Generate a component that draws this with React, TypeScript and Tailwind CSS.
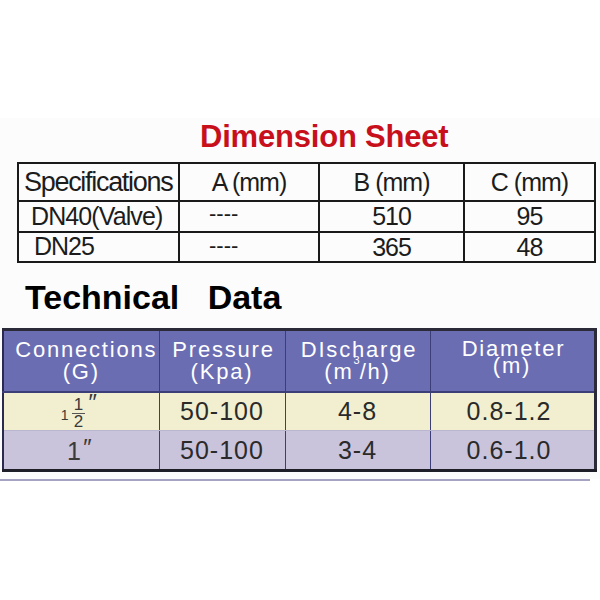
import React from "react";

const F = { fontFamily: '"Liberation Sans", Arial, sans-serif' };

export default function App() {
  const b = "border-2 border-[#1a1a1a]";
  return (
    <div className="w-[600px] h-[600px] bg-white overflow-hidden" style={F}>
      <div className="h-[118px] bg-white" />
      <div className="bg-[#fcfcfc]">
        <div className="pl-[200px] h-[44px] pb-[8px] flex items-center text-[31px] font-bold text-[#c8101c] leading-none tracking-[-0.2px]">
          Dimension Sheet
        </div>
        <div className="pl-[17px]">
          <table className="border-collapse border-2 border-[#1a1a1a] text-[25px] text-[#1c1c1c] leading-none tracking-[-1px]">
            <tbody>
              <tr className="h-[38px]">
                <td className={`w-[161px] ${b} pl-[5px] text-[27px] tracking-[-1.3px]`}>Specifications</td>
                <td className={`w-[140px] ${b} text-center`}>A (mm)</td>
                <td className={`w-[145px] ${b} text-center`}>B (mm)</td>
                <td className={`w-[131px] ${b} text-center`}>C (mm)</td>
              </tr>
              <tr className="h-[31px]">
                <td className={`${b} pl-[12px] tracking-[-0.9px]`}>DN40(Valve)</td>
                <td className={`${b} pl-[29px] text-[22px] tracking-[0px] align-bottom pb-[6px]`}>----</td>
                <td className={`${b} text-center`}>510</td>
                <td className={`${b} text-center`}>95</td>
              </tr>
              <tr className="h-[30px]">
                <td className={`${b} pl-[15px] align-top pt-[1px]`}>DN25</td>
                <td className={`${b} pl-[29px] text-[22px] tracking-[0px] align-bottom pb-[4px]`}>----</td>
                <td className={`${b} text-center align-bottom pb-[1px]`}>365</td>
                <td className={`${b} text-center align-bottom pb-[1px]`}>48</td>
              </tr>
            </tbody>
          </table>
        </div>
        <div className="pl-[25px] pt-[17px] h-[65px] text-[34px] font-bold text-black leading-none whitespace-pre">
          Technical   Data
        </div>
        <div className="pl-[2px]">
          <table className="border-collapse text-center leading-none">
            <tbody>
              <tr className="h-[62px] bg-[#6b6db3] text-white text-[22px] tracking-[1.8px]">
                <td className="w-[156px] border-l-2 border-l-[#2a2a50] border-t-[3px] border-t-[#2a2a38] border-r border-r-[#3c3e78] border-b-2 border-b-[#3c3e78] pt-[1px]">
                  <div className="pl-[10px] whitespace-nowrap">Connections</div>
                  <div className="mt-[0px]">(G)</div>
                </td>
                <td className="w-[126px] border-t-[3px] border-t-[#2a2a38] border-x border-x-[#3c3e78] border-b-2 border-b-[#3c3e78] pt-[1px]">
                  <div className="pl-[3px]">Pressure</div>
                  <div className="mt-[0px]">(Kpa)</div>
                </td>
                <td className="w-[145px] border-t-[3px] border-t-[#2a2a38] border-x border-x-[#3c3e78] border-b-2 border-b-[#3c3e78] pt-[1px]">
                  <div className="pl-[3px]">DIscharge</div>
                  <div className="mt-[0px]">(m<sup className="text-[11px] align-[10px] tracking-normal">3</sup>/h)</div>
                </td>
                <td className="w-[165px] border-t-[3px] border-t-[#2a2a38] border-l border-l-[#3c3e78] border-r-[3px] border-r-[#2a2a38] border-b-2 border-b-[#3c3e78] pb-[6px]">
                  <div className="pl-[3px]">Diameter</div>
                  <div className="mt-[-5px]">(m)</div>
                </td>
              </tr>
              <tr className="h-[39px] bg-[#f1efcf] text-[#2a2a2a] text-[25px] tracking-[1px]">
                <td className="border-l-2 border-l-[#2a2a50] border-r border-r-[#3c3e78] border-b border-b-[#b9b6cf]">
                  <span className="inline-flex items-center text-[#3a3a3a] tracking-normal pr-[6px]">
                    <span className="text-[14px] mt-[8px] mr-[3px]">1</span>
                    <span className="inline-flex flex-col items-center text-[17px] leading-[16px] mt-[4px]">
                      <span className="border-b border-[#555] px-[2px]">1</span>
                      <span>2</span>
                    </span>
                    <span className="text-[24px] self-start mt-[-2px] ml-[2px] italic">″</span>
                  </span>
                </td>
                <td className="border-x border-x-[#3c3e78] border-b border-b-[#b9b6cf]">50-100</td>
                <td className="border-x border-x-[#3c3e78] border-b border-b-[#b9b6cf]">4-8</td>
                <td className="border-l border-l-[#3c3e78] border-r-[3px] border-r-[#2a2a38] border-b border-b-[#b9b6cf] pr-[6px]">0.8-1.2</td>
              </tr>
              <tr className="h-[40px] bg-[#c9c3dc] text-[#2a2a2a] text-[25px] tracking-[1px]">
                <td className="border-l-2 border-l-[#2a2a50] border-r border-r-[#3c3e78] border-b-[3px] border-b-[#1e1e28] text-[#3a3a3a]">
                  <span className="pr-[4px]">1<span className="italic text-[24px] align-[4px]">″</span></span>
                </td>
                <td className="border-x border-x-[#3c3e78] border-b-[3px] border-b-[#1e1e28]">50-100</td>
                <td className="border-x border-x-[#3c3e78] border-b-[3px] border-b-[#1e1e28]">3-4</td>
                <td className="border-l border-l-[#3c3e78] border-r-[3px] border-r-[#2a2a38] border-b-[3px] border-b-[#1e1e28] pr-[6px]">0.6-1.0</td>
              </tr>
            </tbody>
          </table>
        </div>
        <div className="h-[7px]" />
      </div>
      <div className="w-[590px] h-[2px] bg-[#a6a3c2]" />
    </div>
  );
}
